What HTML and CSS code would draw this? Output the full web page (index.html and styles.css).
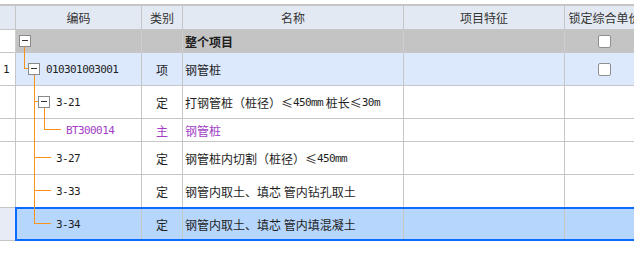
FILE: index.html
```html
<!DOCTYPE html>
<html lang="zh-CN">
<head>
  <meta charset="UTF-8">
  <title>清单编辑</title>
  <link rel="stylesheet" href="styles.css">
</head>
<body>
  <div class="sheet">
    <!-- Header -->
    <div class="row head">
      <div class="rownum"></div>
      <div class="center">编码</div>
      <div class="center">类别</div>
      <div class="center">名称</div>
      <div class="center">项目特征</div>
      <div class="center">锁定综合单价</div>
    </div>

    <div class="row short root">
      <div class="rownum"></div>
      <div class="code"><span class="toggle lvl0"></span></div>
      <div></div>
      <div class="name bold">整个项目</div>
      <div></div>
      <div class="center"><span class="check"></span></div>
    </div>

    <div class="row item">
      <div class="rownum">1</div>
      <div class="code"><span class="toggle lvl1"></span><span class="num gap">010301003001</span></div>
      <div class="center">项</div>
      <div class="name">钢管桩</div>
      <div></div>
      <div class="center"><span class="check"></span></div>
    </div>

    <div class="row">
      <div class="rownum"></div>
      <div class="code"><span class="toggle lvl2"></span><span class="num gap">3-21</span></div>
      <div class="center">定</div>
      <div class="name">打钢管桩（桩径）≤<span class="num">450mm</span>&nbsp;桩长≤<span class="num">30m</span></div>
      <div></div>
      <div></div>
    </div>

    <div class="row short main">
      <div class="rownum"></div>
      <div class="code leaf3"><span class="num">BT300014</span></div>
      <div class="center">主</div>
      <div class="name">钢管桩</div>
      <div></div>
      <div></div>
    </div>

    <div class="row">
      <div class="rownum"></div>
      <div class="code leaf2"><span class="num">3-27</span></div>
      <div class="center">定</div>
      <div class="name">钢管桩内切割（桩径）≤<span class="num">450mm</span></div>
      <div></div>
      <div></div>
    </div>

    <div class="row">
      <div class="rownum"></div>
      <div class="code leaf2"><span class="num">3-33</span></div>
      <div class="center">定</div>
      <div class="name">钢管内取土、填芯 管内钻孔取土</div>
      <div></div>
      <div></div>
    </div>

    <div class="row sel">
      <div class="rownum"></div>
      <div class="code leaf2"><span class="num">3-34</span></div>
      <div class="center">定</div>
      <div class="name">钢管内取土、填芯 管内填混凝土</div>
      <div></div>
      <div></div>
    </div>

    <!-- tree connector lines drawn over the code column -->
    <svg class="tree" width="80" height="265" viewBox="0 0 80 265">
      <path d="M24.5 47 V68.5 H28" />
      <path d="M34.5 75 V223.5 H51" />
      <path d="M34.5 101.5 H38" />
      <path d="M44.5 108 V129.5 H61" />
      <path d="M34.5 157.5 H51" />
      <path d="M34.5 190.5 H51" />
    </svg>
  </div>
</body>
</html>
```

FILE: styles.css
```css
/* Grid of bill items */
body {
  margin: 0;
  padding: 0;
  background: #fff;
  overflow: hidden;
  font-family: "Noto Sans CJK SC", sans-serif;
  font-size: 12px;
  color: #1e1e1e;
}

.sheet {
  position: relative;
  width: 644px;
  margin-top: 4px;
  border-top: 2px solid #c6c6c6;
}

.row {
  display: grid;
  grid-template-columns: 16px 126px 41px 221px 161px 80px;
  height: 33px;
}

.row > div {
  box-sizing: border-box;
  border-right: 1px solid #c6c6c6;
  border-bottom: 1px solid #c6c6c6;
  display: flex;
  align-items: center;
  white-space: nowrap;
  overflow: hidden;
}

.row.short {
  height: 23px;
}

.row.head {
  height: 24px;
  background: #e3e9f2;
  color: #333;
}

.row.root {
  background: #c4c4c4;
}

.row.root > div {
  border-right-color: #cfcfcf;
}

.row.item {
  background: #dce9fd;
}

.row.main {
  color: #a23ec6;
}

.row.sel {
  position: relative;
  background: #b6d6fd;
}

/* selection frame */
.row.sel::after {
  content: "";
  position: absolute;
  left: 15px;
  right: 0;
  top: -1px;
  bottom: 0;
  border: 2px solid #0a6cff;
  pointer-events: none;
}

.row > .rownum {
  background: #fff;
  padding-left: 3px;
  font-family: "DejaVu Sans Mono", monospace;
  font-size: 11px;
}

.row.head > .rownum {
  background: #e3e9f2;
}

.row.sel > .rownum {
  background: #e6ebf5;
}

.center {
  justify-content: center;
}

.name {
  padding-left: 2px;
}

.bold {
  font-weight: bold;
}

.num {
  font-family: "DejaVu Sans Mono", monospace;
  font-size: 11px;
  letter-spacing: -0.6px;
}

.gap {
  margin-left: 6px;
}

.leaf2 {
  padding-left: 40px;
}

.leaf3 {
  padding-left: 50px;
}

/* expand / collapse boxes */
.toggle {
  position: relative;
  display: inline-block;
  box-sizing: border-box;
  width: 12px;
  height: 12px;
  border: 1px solid #8a8a8a;
  background: #fff;
  flex: none;
}

.toggle::before {
  content: "";
  position: absolute;
  left: 2px;
  top: 4px;
  width: 6px;
  height: 1px;
  background: #333;
}

.lvl0 { margin-left: 3px; }
.lvl1 { margin-left: 12px; }
.lvl2 { margin-left: 22px; }

.check {
  display: inline-block;
  box-sizing: border-box;
  width: 13px;
  height: 13px;
  border: 1px solid #8f8f8f;
  border-radius: 2px;
  background: #fff;
}

.tree {
  position: absolute;
  left: 0;
  top: -6px;
  fill: none;
  stroke: #f7931e;
  stroke-width: 1;
  shape-rendering: crispEdges;
  pointer-events: none;
}
```
